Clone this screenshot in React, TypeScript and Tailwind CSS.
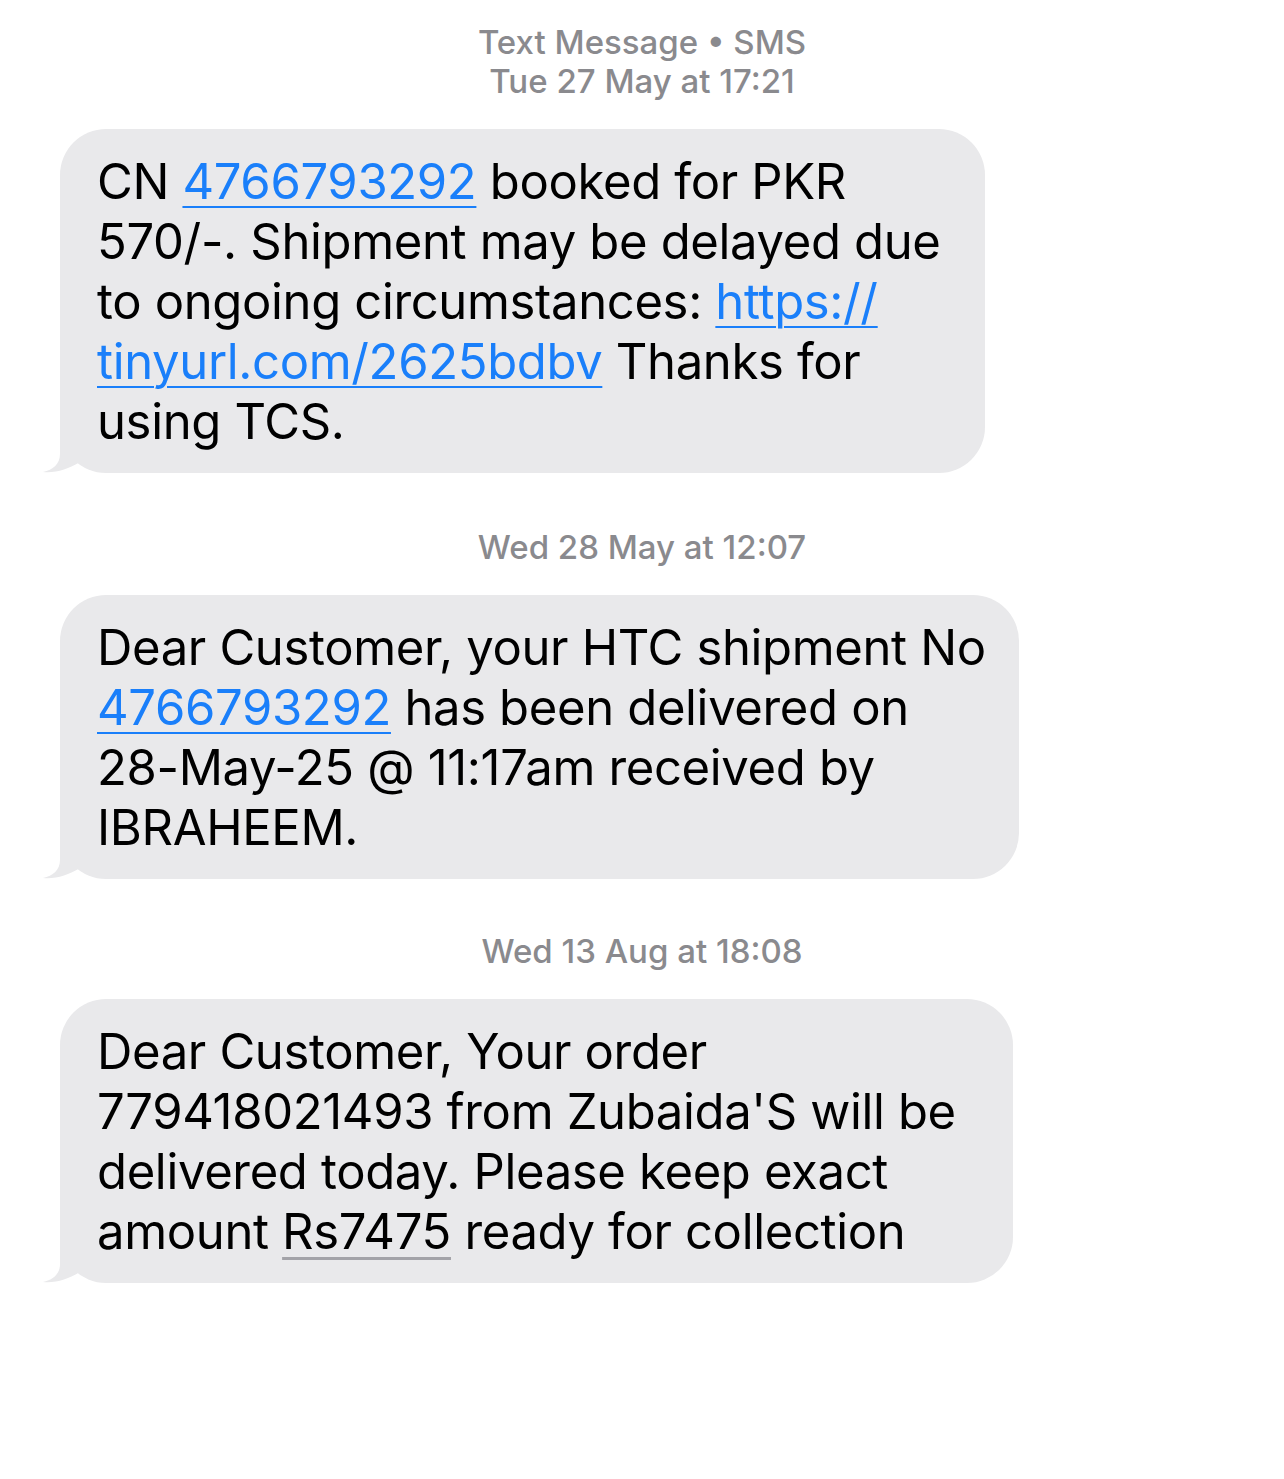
import React from 'react';

const Tail = () => (
  <svg className="absolute left-[-20px] bottom-[-1px]" width="50" height="55" viewBox="0 0 50 55">
    <path d="M20 0 L20 35 C20 45 13 51 3 53 C15 54.5 28 50 40 43 L40 0 Z" fill="#e9e9eb" />
  </svg>
);

const Link = ({ children }: { children: React.ReactNode }) => (
  <span className="text-[#1a7ffa] underline decoration-[2px] underline-offset-[7px]">{children}</span>
);

const Stamp = ({ text }: { text: string }) => (
  <div className="text-center text-[33px] leading-[40px] font-medium text-[#8a8a8e]">{text}</div>
);

const Bubble = ({ width, children }: { width: string; children: React.ReactNode }) => (
  <div className={`relative ml-[60px] rounded-[46px] bg-[#e9e9eb] pl-[37px] pt-[23px] pb-[21px] text-[49px] leading-[60px] tracking-[-0.35px] text-black ${width}`}>
    {children}
    <Tail />
  </div>
);

export default function App() {
  return (
    <div className="min-h-[1479px] bg-white pt-[23px]" style={{ fontFamily: 'Inter, "Noto Sans", sans-serif' }}>
      <div className="text-center text-[33px] leading-[39px] font-medium text-[#8a8a8e]">
        <div>Text Message • SMS</div>
        <div>Tue 27 May at 17:21</div>
      </div>

      <div className="mt-[28px]">
        <Bubble width="w-[925px]">
          CN <Link>4766793292</Link> booked for PKR
          <br />
          570/-. Shipment may be delayed due
          <br />
          to ongoing circumstances: <Link>https://</Link>
          <br />
          <Link>tinyurl.com/2625bdbv</Link> Thanks for
          <br />
          using TCS.
        </Bubble>
      </div>

      <div className="mt-[54px] mb-[28px]">
        <Stamp text="Wed 28 May at 12:07" />
      </div>

      <Bubble width="w-[959px]">
        Dear Customer, your HTC shipment No
        <br />
        <Link>4766793292</Link> has been delivered on
        <br />
        28-May-25 @ 11:17am received by
        <br />
        IBRAHEEM.
      </Bubble>

      <div className="mt-[52px] mb-[28px]">
        <Stamp text="Wed 13 Aug at 18:08" />
      </div>

      <Bubble width="w-[953px]">
        Dear Customer, Your order
        <br />
        779418021493 from Zubaida'S will be
        <br />
        delivered today. Please keep exact
        <br />
        amount <span className="underline decoration-[#a3a3a8] decoration-[3px] underline-offset-[8px]">Rs7475</span> ready for collection
      </Bubble>
    </div>
  );
}
